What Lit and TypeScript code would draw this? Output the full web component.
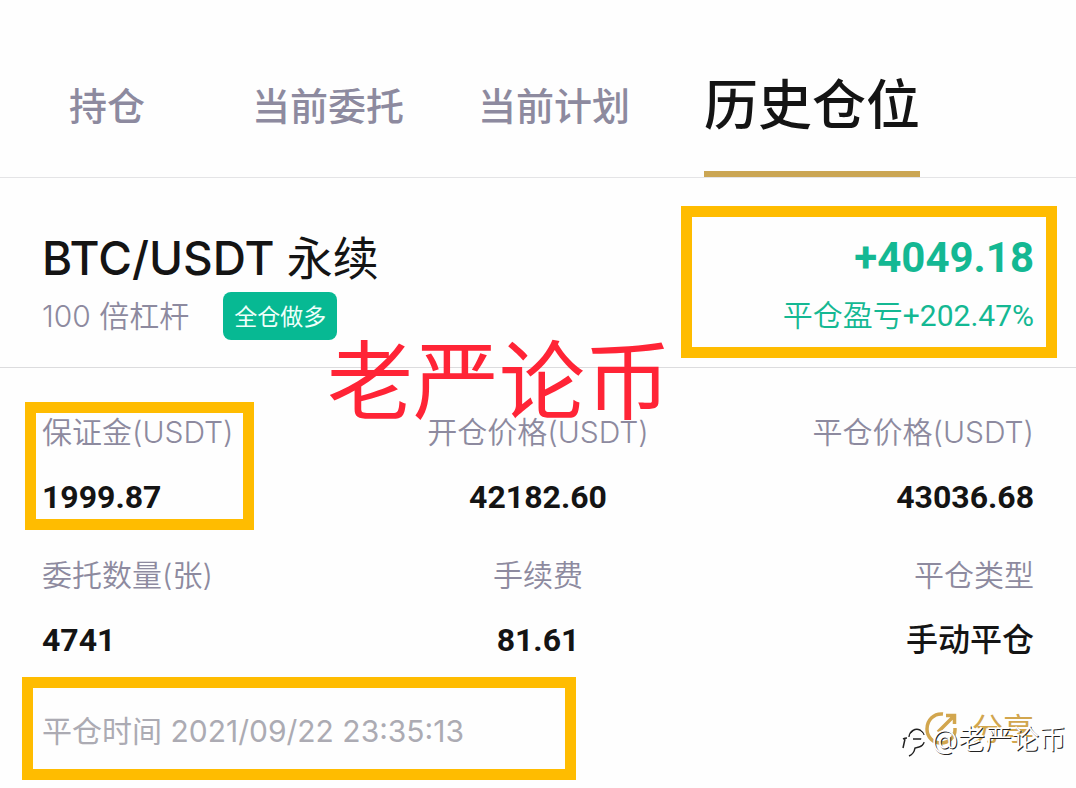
import { LitElement, html, css } from "lit";
import { customElement, property, state } from "lit/decorators.js";
import { classMap } from "lit/directives/class-map.js";

interface Field {
  label: string;
  value: string;
  marked?: boolean;
}

const TABS = ["持仓", "当前委托", "当前计划", "历史仓位"];

const FIELDS: Field[] = [
  { label: "保证金(USDT)", value: "1999.87", marked: true },
  { label: "开仓价格(USDT)", value: "42182.60" },
  { label: "平仓价格(USDT)", value: "43036.68" },
  { label: "委托数量(张)", value: "4741" },
  { label: "手续费", value: "81.61" },
  { label: "平仓类型", value: "手动平仓" },
];

@customElement("position-tabs")
export class PositionTabs extends LitElement {
  @state() private active = 3;

  static styles = css`
    :host {
      display: block;
      border-bottom: 1px solid #e4e4e6;
    }
    .tabs {
      display: flex;
      gap: 74px;
      padding: 44px 36px 0;
    }
    .tab {
      min-width: 142px;
      height: 133px;
      padding: 0 0 4px;
      border: 0;
      border-bottom: 6px solid transparent;
      background: none;
      color: #8d8a9f;
      font-family: inherit;
      font-size: 38px;
      font-weight: 500;
      line-height: 60px;
      white-space: nowrap;
      cursor: pointer;
    }
    .tab.active {
      border-bottom-color: #cba654;
      color: #141414;
      font-size: 54px;
    }
  `;

  render() {
    return html`<nav class="tabs" role="tablist">
      ${TABS.map(
        (name, i) => html`<button
          class=${classMap({ tab: true, active: i === this.active })}
          role="tab"
          aria-selected=${i === this.active ? "true" : "false"}
          @click=${() => (this.active = i)}
        >${name}</button>`
      )}
    </nav>`;
  }
}

@customElement("position-field")
export class PositionField extends LitElement {
  @property() label = "";
  @property() value = "";
  @property({ type: Boolean }) marked = false;

  static styles = css`
    :host {
      display: block;
    }
    .field {
      display: inline-flex;
      flex-direction: column;
      gap: 25px;
      position: relative;
      text-align: inherit;
    }
    .label {
      color: #8d8a9f;
      font-family: Inter, "Noto Sans CJK SC", sans-serif;
      font-size: 30px;
      font-weight: 350;
      line-height: 40px;
      white-space: nowrap;
    }
    .value {
      color: #141414;
      font-family: Roboto, "Noto Sans CJK SC", sans-serif;
      font-size: 32px;
      font-weight: 700;
      line-height: 40px;
    }
    .value.words {
      font-weight: 500;
    }
    .mark {
      position: absolute;
      inset: -10px -20px -13px -17px;
      border: 11px solid #ffbc00;
      pointer-events: none;
    }
  `;

  render() {
    const words = !/^[\d.]+$/.test(this.value);
    return html`<div class="field">
      <span class="label">${this.label}</span>
      <span class=${classMap({ value: true, words })}>${this.value}</span>
      ${this.marked ? html`<span class="mark"></span>` : null}
    </div>`;
  }
}

@customElement("app-root")
export class AppRoot extends LitElement {
  static styles = css`
    :host {
      display: block;
      position: relative;
      min-height: 100vh;
      overflow: hidden;
      background: #fefefe;
      color: #141414;
      font-family: Inter, "Noto Sans CJK SC", sans-serif;
    }
    .summary {
      display: flex;
      justify-content: space-between;
      position: relative;
      padding: 48px 42px 27px;
      border-bottom: 1px solid #dcdcde;
    }
    .side {
      display: flex;
      flex-direction: column;
      gap: 2px;
    }
    .side.result {
      position: relative;
      align-items: flex-end;
      color: #14b893;
      font-family: Roboto, "Noto Sans CJK SC", sans-serif;
    }
    .title {
      margin: 0;
      font-size: 46px;
      font-weight: 500;
      line-height: 64px;
    }
    .title .kind {
      font-weight: 400;
    }
    .meta {
      display: flex;
      align-items: center;
      gap: 34px;
      height: 48px;
      color: #8d8a9f;
      font-size: 30px;
      font-weight: 350;
      line-height: 46px;
    }
    .badge {
      padding: 2px 11px 0;
      border-radius: 8px;
      background: #07b993;
      color: #effffa;
      font-size: 23px;
      font-weight: 400;
    }
    .profit {
      font-size: 42px;
      font-weight: 700;
      line-height: 64px;
    }
    .ratio {
      font-size: 30px;
      font-weight: 350;
      line-height: 48px;
    }
    .ratio b {
      font-weight: 400;
    }
    .mark {
      position: absolute;
      border: 11px solid #ffbc00;
      pointer-events: none;
    }
    .mark.result-mark {
      inset: -20px -23px -18px -102px;
    }
    .mark.time-mark {
      inset: -34px -112px -29px -20px;
    }
    .fields {
      display: grid;
      grid-template-columns: repeat(3, 1fr);
      row-gap: 38px;
      padding: 44px 42px 51px;
    }
    .fields > :nth-child(3n + 2) {
      text-align: center;
    }
    .fields > :nth-child(3n) {
      text-align: right;
    }
    .foot {
      display: flex;
      align-items: center;
      justify-content: space-between;
      padding: 0 42px 37px;
    }
    .time {
      position: relative;
      color: #acabb3;
      font-size: 30px;
      line-height: 40px;
    }
    .share {
      display: flex;
      align-items: center;
      gap: 12px;
      padding: 0 0 4px;
      border: 0;
      background: none;
      color: #d2a64e;
      font-family: inherit;
      font-size: 31px;
      line-height: 36px;
      cursor: pointer;
    }
    .overlay-name {
      position: absolute;
      top: 334px;
      left: 327px;
      color: #ff2436;
      font-size: 86px;
      line-height: 96px;
      white-space: nowrap;
      pointer-events: none;
    }
    .watermark {
      display: flex;
      align-items: center;
      position: absolute;
      right: 10px;
      bottom: 30px;
      color: #ffffff;
      font-size: 27px;
      font-weight: 350;
      line-height: 36px;
      text-shadow: 1px 1px 0 #222222;
      white-space: nowrap;
      pointer-events: none;
    }
  `;

  render() {
    return html`
      <position-tabs></position-tabs>
      <section class="summary">
        <div class="side">
          <h1 class="title">BTC/USDT <span class="kind">永续</span></h1>
          <div class="meta"><span>100 倍杠杆</span><span class="badge">全仓做多</span></div>
        </div>
        <div class="side result">
          <span class="profit">+4049.18</span>
          <span class="ratio">平仓盈亏<b>+202.47%</b></span>
          <span class="mark result-mark"></span>
        </div>
      </section>
      <section class="fields">
        ${FIELDS.map(
          (f) => html`<position-field
            .label=${f.label}
            .value=${f.value}
            ?marked=${f.marked}
          ></position-field>`
        )}
      </section>
      <footer class="foot">
        <span class="time">平仓时间 2021/09/22 23:35:13<span class="mark time-mark"></span></span>
        <button class="share">
          <svg width="36" height="36" viewBox="0 0 36 36" fill="none" stroke="currentColor" stroke-width="3.500">
            <path d="M19 3C10 2 3 9 3 18c0 8.500 6.500 14 14 14s14-6 14-13v-2" />
            <path d="M14 21L29 6M22 4.500h8.500v8.500" />
          </svg>
          <span>分享</span>
        </button>
      </footer>
      <div class="overlay-name">老严论币</div>
      <div class="watermark">
        <svg width="30" height="34" viewBox="0 0 30 34" fill="none" stroke-width="1.500">
          <path stroke="#222222" d="M1 16q2-1 4-1M3 16l-2 9M7 14c1-6 6-9 11-7q3 2 4 5M11 16h9M22 19q-1 4-5 5l-4 1q-1 6-6 8" />
          <path stroke="#ffffff" stroke-width="3" d="M9 14c1-4 5-6 9-4 4 3 4 9-1 11l-6 1" />
        </svg>
        <span>@老严论币</span>
      </div>
    `;
  }
}
